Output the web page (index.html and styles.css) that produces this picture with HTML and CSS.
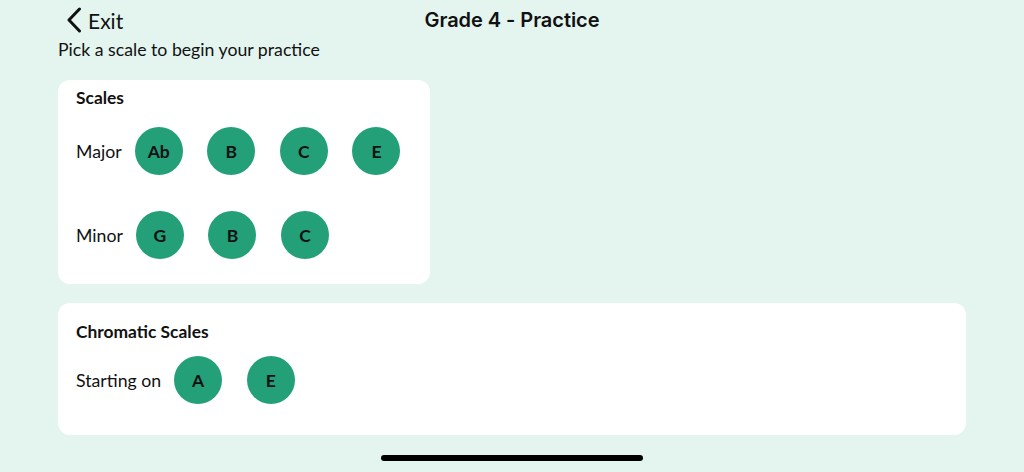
FILE: index.html
```html
<!DOCTYPE html>
<html lang="en">
<head>
<meta charset="utf-8">
<title>Grade 4 - Practice</title>
<link rel="stylesheet" href="styles.css">
</head>
<body>
<div class="screen">
  <header class="navbar">
    <a class="back" href="#">
      <svg class="chev" width="16" height="26" viewBox="0 0 16 26" aria-hidden="true"><path d="M13.5 2 L3 13 L13.5 24" fill="none" stroke="#111" stroke-width="3" stroke-linecap="round" stroke-linejoin="round"/></svg>
      <span>Exit</span>
    </a>
    <h1 class="title">Grade 4 - Practice</h1>
    <div></div>
  </header>
  <main class="content">
    <p class="hint">Pick a scale to begin your practice</p>
    <section class="card card-scales">
      <h2 class="card-title">Scales</h2>
      <div class="row row-major">
        <span class="row-label">Major</span>
        <div class="keys">
          <button class="key">Ab</button>
          <button class="key">B</button>
          <button class="key">C</button>
          <button class="key">E</button>
        </div>
      </div>
      <div class="row row-minor">
        <span class="row-label">Minor</span>
        <div class="keys">
          <button class="key">G</button>
          <button class="key">B</button>
          <button class="key">C</button>
        </div>
      </div>
    </section>
    <section class="card card-chromatic">
      <h2 class="card-title">Chromatic Scales</h2>
      <div class="row row-chrom">
        <span class="row-label">Starting on</span>
        <div class="keys">
          <button class="key">A</button>
          <button class="key">E</button>
        </div>
      </div>
    </section>
  </main>
  <div class="home-indicator"></div>
</div>
</body>
</html>
```
FILE: styles.css
```css
* { box-sizing: border-box; }
html, body { margin: 0; padding: 0; }
body {
  background: #e4f5ef;
  font-family: Lato, "Noto Sans", "Liberation Sans", sans-serif;
  color: #111;
  width: 1024px;
  height: 472px;
  overflow: hidden;
}
.screen { position: relative; width: 1024px; height: 472px; }

.navbar {
  display: grid;
  grid-template-columns: 1fr auto 1fr;
  align-items: center;
  height: 40px;
  padding: 0 58px;
}
.back {
  display: flex;
  align-items: center;
  gap: 6px;
  margin-left: 8px;
  color: #111;
  text-decoration: none;
  font-size: 21px;
  justify-self: start;
}
.chev { display: block; }
.title {
  margin: 0;
  font-family: Inter, "Liberation Sans", sans-serif;
  font-weight: 600;
  font-size: 20px;
  letter-spacing: -0.05px;
}

.content { padding: 0 58px; }
.hint {
  margin: 0;
  height: 19px;
  line-height: 19px;
  font-size: 17.7px;
  margin-bottom: 21px;
}

.card {
  background: #fff;
  border-radius: 12px;
  padding-left: 18px;
}
.card-scales {
  width: 372px;
  height: 204px;
  padding-top: 8px;
}
.card-chromatic {
  margin-top: 19px;
  height: 132px;
  padding-top: 19px;
}
.card-title {
  margin: 0;
  font-size: 17.4px;
  font-weight: 700;
  line-height: 20px;
}
.row {
  display: flex;
  align-items: center;
}
.row-major { margin-top: 19px; }
.row-minor { margin-top: 36px; }
.row-chrom { margin-top: 14px; }
.row-label {
  font-size: 17.7px;
  margin-right: 13px;
}
.keys {
  display: flex;
  gap: 24.6px;
}
.key {
  width: 48px;
  height: 48px;
  border-radius: 50%;
  border: none;
  padding: 0;
  background: #23a078;
  color: #111;
  font-family: Lato, "Noto Sans", sans-serif;
  font-weight: 700;
  font-size: 17.5px;
}

.home-indicator {
  position: absolute;
  left: 381px;
  top: 455px;
  width: 262px;
  height: 6px;
  border-radius: 3px;
  background: #000;
}
```
